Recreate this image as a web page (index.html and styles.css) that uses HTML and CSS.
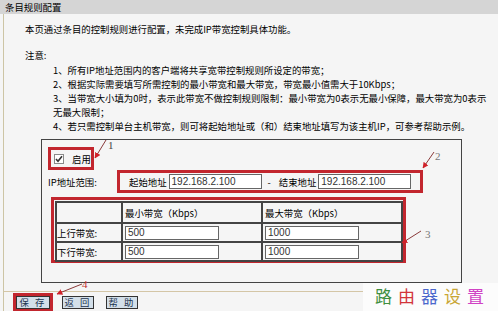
FILE: index.html
```html
<!DOCTYPE html>
<html lang="zh-CN">
<head>
    <meta charset="UTF-8">
    <meta name="viewport" content="width=device-width, initial-scale=1.0">
    <title>条目规则配置</title>
    <link rel="stylesheet" href="styles.css">
</head>
<body>
    <!-- Title -->
    <div class="title-bar">条目规则配置</div>

    <div class="page">
        <p class="intro">本页通过条目的控制规则进行配置，未完成IP带宽控制具体功能。</p>
        <p class="note-title">注意:</p>
        <ul class="notes">
            <li>1、所有IP地址范围内的客户端将共享宽带控制规则所设定的带宽；</li>
            <li>2、根据实际需要填写所需控制的最小带宽和最大带宽，带宽最小值需大于10Kbps；</li>
            <li>3、当带宽大小填为0时，表示此带宽不做控制规则限制：最小带宽为0表示无最小保障，最大带宽为0表示<br>无最大限制；</li>
            <li>4、若只需控制单台主机带宽，则可将起始地址或（和）结束地址填写为该主机IP，可参考帮助示例。</li>
        </ul>

        <!-- Rule form -->
        <div class="rule-box">
            <div class="mark enable-mark">
                <span class="checkbox">
                    <svg width="8" height="8" viewBox="0 0 8 8"><path d="M1 4 L3 6.2 L7 1.2" fill="none" stroke="#333" stroke-width="1.6"/></svg>
                </span>
                <span class="enable-label">启用</span>
            </div>

            <div class="ip-row">
                <span class="field-label">IP地址范围:</span>
                <div class="mark ip-mark">
                    <span>起始地址</span>
                    <input class="text-input ip-input" type="text" value="192.168.2.100">
                    <span class="dash">-</span>
                    <span>结束地址</span>
                    <input class="text-input ip-input" type="text" value="192.168.2.100">
                </div>
            </div>

            <div class="mark table-mark">
                <table class="bw-table">
                    <colgroup>
                        <col class="col-name">
                        <col class="col-val">
                        <col class="col-val">
                    </colgroup>
                    <tr class="head-row">
                        <td></td>
                        <td>最小带宽（Kbps）</td>
                        <td>最大带宽（Kbps）</td>
                    </tr>
                    <tr>
                        <td>上行带宽:</td>
                        <td><input class="text-input bw-input" type="text" value="500"></td>
                        <td><input class="text-input bw-input" type="text" value="1000"></td>
                    </tr>
                    <tr>
                        <td>下行带宽:</td>
                        <td><input class="text-input bw-input" type="text" value="500"></td>
                        <td><input class="text-input bw-input" type="text" value="1000"></td>
                    </tr>
                </table>
            </div>
        </div>

        <!-- Buttons -->
        <div class="footer">
            <div class="mark save-mark"><button class="btn btn-save">保 存</button></div>
            <button class="btn btn-back">返 回</button>
            <button class="btn btn-help">帮 助</button>
        </div>
    </div>

    <!-- Numbered call-outs drawn over the form -->
    <svg class="callouts" width="498" height="311" viewBox="0 0 498 311">
        <defs>
            <marker id="tip" viewBox="0 0 10 10" refX="9" refY="5" markerWidth="6" markerHeight="6" orient="auto">
                <path d="M0 0 L10 5 L0 10 z" fill="#d0222a"/>
            </marker>
        </defs>
        <line x1="106" y1="140" x2="95" y2="158" stroke="#8a3a3a" stroke-width="1" marker-end="url(#tip)"/>
        <text x="108" y="149" class="num num-dark">1</text>
        <line x1="434" y1="152" x2="423" y2="168" stroke="#8a3a3a" stroke-width="1" marker-end="url(#tip)"/>
        <text x="435" y="160" class="num">2</text>
        <line x1="421" y1="231" x2="402" y2="243" stroke="#8a3a3a" stroke-width="1" marker-end="url(#tip)"/>
        <text x="425" y="238" class="num">3</text>
        <line x1="82" y1="284" x2="57" y2="294" stroke="#8a3a3a" stroke-width="1" marker-end="url(#tip)"/>
        <text x="82" y="288" class="num num-red">4</text>
    </svg>

    <div class="watermark">
        <span class="wm-green">路</span><span class="wm-red">由</span><span class="wm-blue">器</span><span class="wm-gold">设</span><span class="wm-pink">置</span>
    </div>
</body>
</html>
```

FILE: styles.css
```css
/* General */
body {
    margin: 0;
    background: #f5f5f5;
    font-family: "Noto Sans CJK SC", "Liberation Sans", sans-serif;
    font-size: 9.4px;
    color: #000;
    position: relative;
    height: 311px;
    overflow: hidden;
}

.title-bar {
    height: 14px;
    line-height: 14px;
    padding-left: 5px;
    background: #d5d5d5;
}

.page {
    margin-left: 3px;
    border-left: 1px solid #cdc5a5;
    height: 297px;
}

.intro {
    margin: 0;
    padding: 8px 0 0 21px;
    line-height: 14px;
}

.note-title {
    margin: 12px 0 0 21px;
    line-height: 14px;
}

.notes {
    list-style: none;
    margin: 1px 0 0 49px;
    padding: 0;
    line-height: 14px;
    white-space: nowrap;
}

/* Rule box */
.rule-box {
    box-sizing: border-box;
    width: 421px;
    height: 144px;
    margin: 6px 0 0 37px;
    padding: 7px 0 0 6px;
    border: 1px solid #444;
}

/* red call-out frames */
.mark {
    box-sizing: border-box;
    border: 3px solid #c2262e;
}

.enable-mark {
    width: 46px;
    height: 23px;
    display: flex;
    align-items: flex-end;
    padding: 0 0 2px 3px;
    white-space: nowrap;
}

.checkbox {
    box-sizing: border-box;
    flex-shrink: 0;
    width: 10px;
    height: 10px;
    margin-bottom: 1px;
    border: 1px solid #8a8a8a;
    background: #fff;
    display: flex;
    align-items: center;
    justify-content: center;
}

.enable-label {
    flex-shrink: 0;
    margin-left: 8px;
    line-height: 11px;
}

.ip-row {
    display: flex;
    align-items: center;
}

.field-label {
    width: 69px;
}

.ip-mark {
    width: 306px;
    height: 23px;
    display: flex;
    align-items: center;
    padding-left: 9px;
    white-space: nowrap;
}

.text-input {
    box-sizing: border-box;
    border: 1px solid #666;
    background: #fff;
    padding: 0 2px;
    font-family: "Liberation Sans", Arial, sans-serif;
    font-size: 10px;
    color: #333;
    outline: none;
}

.ip-input {
    width: 93px;
    height: 15px;
    margin-left: 2px;
}

.dash {
    margin: 0 8px 0 6px;
}

.table-mark {
    width: 355px;
    height: 66px;
    margin: 4px 0 0 3px;
    padding: 1px;
}

.bw-table {
    width: 346px;
    table-layout: fixed;
    border-collapse: separate;
    border-spacing: 0;
    border: 1px solid #444;
}

.col-name {
    width: 66px;
}

.col-val {
    width: 140px;
}

.bw-table td {
    border: 1px solid #444;
    padding: 0 0 0 2px;
    height: 17px;
    line-height: 12px;
    white-space: nowrap;
}

.bw-table .head-row td {
    height: 19px;
}

.bw-table td:first-child {
    padding-left: 0;
}

.bw-input {
    display: block;
    width: 94px;
    height: 14px;
}

/* Footer buttons */
.footer {
    margin-top: 8px;
    border-top: 1px solid #d4c6a6;
    padding: 1px 0 0 9px;
    display: flex;
    align-items: flex-start;
}

.btn {
    box-sizing: border-box;
    height: 13px;
    width: 32px;
    padding: 0;
    border: 1px solid #333;
    background: #d3dfe9;
    color: #1c3450;
    font-family: "Noto Sans CJK SC", sans-serif;
    font-size: 9.4px;
    line-height: 11px;
    letter-spacing: 2px;
}

.btn-save {
    display: block;
    width: 34px;
}

.btn-back {
    margin: 3px 0 0 9px;
}

.btn-help {
    margin: 3px 0 0 12px;
}

/* Overlays */
.callouts {
    position: absolute;
    left: 0;
    top: 0;
    pointer-events: none;
}

.num {
    font-family: "Liberation Serif", serif;
    font-size: 11px;
    fill: #777;
}

.num-dark {
    fill: #444;
}

.num-red {
    fill: #c03030;
}

.watermark {
    position: absolute;
    left: 363px;
    top: 283px;
    width: 123px;
    height: 28px;
    padding-left: 12px;
    background: #fcfcfc;
    font-size: 17px;
    line-height: 26px;
    letter-spacing: 6px;
    white-space: nowrap;
}

.wm-green { color: #3f8f3f; }
.wm-red { color: #d2343a; }
.wm-blue { color: #4a66cc; }
.wm-gold { color: #c9a634; }
.wm-pink { color: #d043c4; }
```
